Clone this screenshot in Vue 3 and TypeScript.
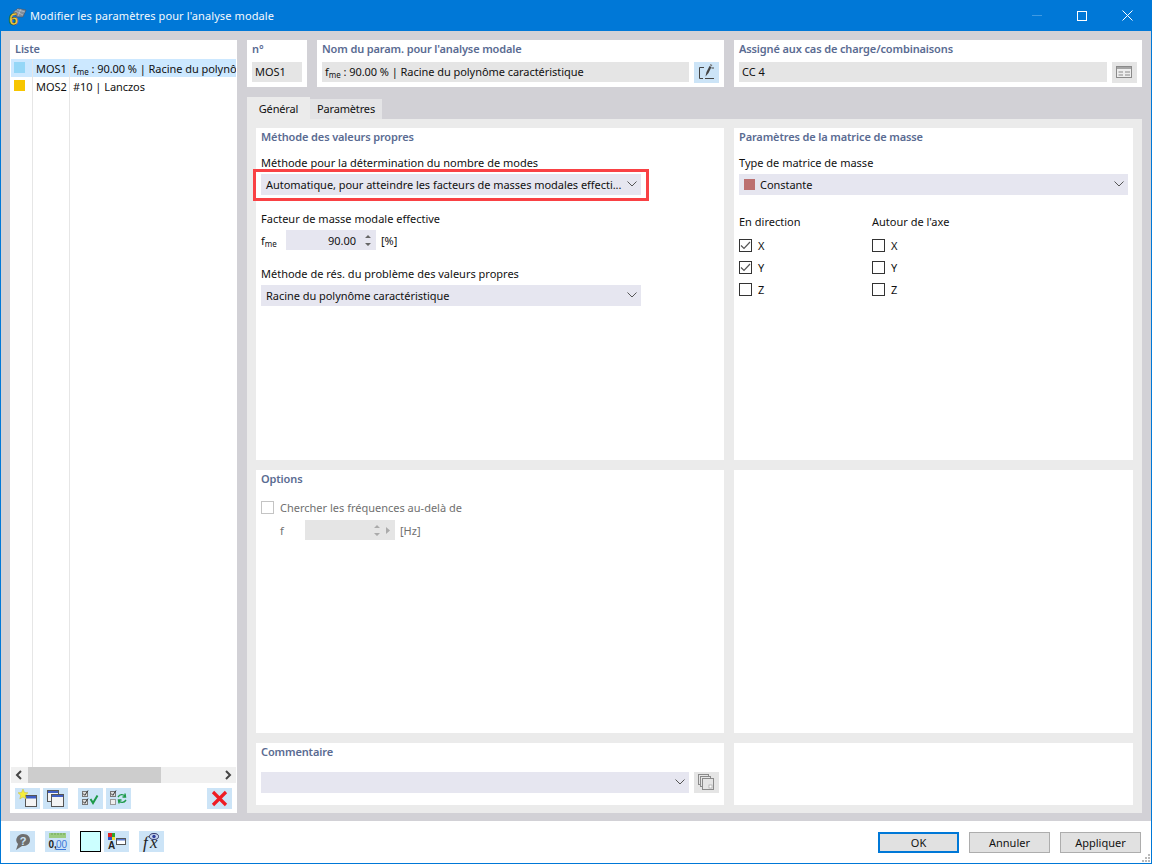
<script setup lang="ts">
const listRows = [
  { id: 'MOS1', color: '#95d7f7', fme: true, text: ' : 90.00 % | Racine du polynô', selected: true },
  { id: 'MOS2', color: '#f7c600', fme: false, text: '#10 | Lanczos', selected: false }
]

const axes = [
  { name: 'X', dir: true, rot: false },
  { name: 'Y', dir: true, rot: false },
  { name: 'Z', dir: false, rot: false }
]
</script>

<template>
  <div class="window">
    <header class="titlebar">
      <svg class="app-icon" width="20" height="26" viewBox="0 0 20 26">
        <path d="M5 9 L10 5.500 L18 7 L15 14 L9 14 Z" fill="#7f8c9c" stroke="#4c5664" stroke-width=".6" />
        <path d="M7 8 L15 12 M9 6.500 L17 9 M13 6 L10 13" stroke="#c6ccd4" stroke-width=".6" fill="none" />
        <text x="1" y="21.500" class="six">6</text>
      </svg>
      <span class="title">Modifier les paramètres pour l'analyse modale</span>
      <div class="win-controls">
        <span class="win-min"></span>
        <span class="win-max"></span>
        <svg class="win-close" width="11" height="11" viewBox="0 0 11 11">
          <path d="M.5 .5 L10.500 10.500 M10.500 .5 L.5 10.500" stroke="#fff" stroke-width="1" />
        </svg>
      </div>
    </header>

    <main class="body">
      <aside class="list-panel">
        <div class="section-title list-title">Liste</div>
        <div class="list">
          <div v-for="row in listRows" :key="row.id" class="list-row" :class="{ selected: row.selected }">
            <div class="cell cell-color"><span class="swatch" :style="{ background: row.color }"></span></div>
            <div class="cell cell-id">{{ row.id }}</div>
            <div class="cell cell-text"><template v-if="row.fme">f<sub>me</sub></template>{{ row.text }}</div>
          </div>
          <div class="list-row filler">
            <div class="cell cell-color"></div>
            <div class="cell cell-id"></div>
            <div class="cell cell-text"></div>
          </div>
        </div>
        <div class="hscroll">
          <svg width="17" height="16" viewBox="0 0 17 16"><path d="M10 4 L6 8 L10 12" fill="none" stroke="#444" stroke-width="2" /></svg>
          <div class="hscroll-track"><div class="hscroll-thumb"></div></div>
          <svg width="17" height="16" viewBox="0 0 17 16"><path d="M7 4 L11 8 L7 12" fill="none" stroke="#444" stroke-width="2" /></svg>
        </div>
        <div class="list-tools">
          <button class="icon-btn">
            <svg width="25" height="21" viewBox="0 0 25 21">
              <rect x="10.500" y="7.500" width="11" height="11" fill="#f4f4f4" stroke="#555" />
              <rect x="11" y="8" width="10" height="2.500" fill="#3f5fc4" />
              <path d="M8 1 L9.500 4.500 L13 4.800 L10.300 7.200 L11.200 11 L8 9 L4.800 11 L5.700 7.200 L3 4.800 L6.500 4.500 Z" fill="#f6ee3a" stroke="#c9b93a" stroke-width=".5" />
            </svg>
          </button>
          <button class="icon-btn">
            <svg width="25" height="21" viewBox="0 0 25 21">
              <rect x="4.500" y="2.500" width="11" height="11" fill="#f4f4f4" stroke="#555" />
              <rect x="5" y="3" width="10" height="2" fill="#3f5fc4" />
              <rect x="8.500" y="6.500" width="12" height="12" fill="#f4f4f4" stroke="#555" />
              <rect x="9" y="7" width="11" height="2" fill="#3f5fc4" />
            </svg>
          </button>
          <button class="icon-btn tool-gap">
            <svg width="25" height="21" viewBox="0 0 25 21">
              <rect x="4.500" y="3.500" width="5" height="5" fill="#ddd" stroke="#777" />
              <rect x="4.500" y="11.500" width="5" height="5" fill="#ddd" stroke="#777" />
              <path d="M5 5.500 L6.800 7.300 L10 2.500 M5 13.500 L6.800 15.300 L10 10.500" fill="none" stroke="#333" stroke-width="1" />
              <path d="M12.500 11 L15 15 L19.500 7.500" fill="none" stroke="#1e9a4a" stroke-width="2" />
            </svg>
          </button>
          <button class="icon-btn">
            <svg width="25" height="21" viewBox="0 0 25 21">
              <rect x="4.500" y="3.500" width="5" height="5" fill="#ddd" stroke="#777" />
              <rect x="4.500" y="11.500" width="5" height="5" fill="#eee" stroke="#999" />
              <path d="M5 5.500 L6.800 7.300 L10 2.500" fill="none" stroke="#333" stroke-width="1" />
              <path d="M12 9 C14 6 17 6 19 8 M19 5.500 L19.500 9 L16.500 9" fill="none" stroke="#1e9a4a" stroke-width="1.400" />
              <path d="M20 12 C18 15 15 15 13 13 M13 15.500 L12.500 12 L15.500 12" fill="none" stroke="#1e9a4a" stroke-width="1.400" />
            </svg>
          </button>
          <button class="icon-btn tool-push">
            <svg width="25" height="21" viewBox="0 0 25 21">
              <path d="M6 4 L19 17 M19 4 L6 17" stroke="#ee1c25" stroke-width="3.200" />
            </svg>
          </button>
        </div>
      </aside>

      <div class="content">
        <section class="head-row">
          <div class="head-box box-no">
            <div class="section-title">n°</div>
            <div class="readonly">MOS1</div>
          </div>
          <div class="head-box box-name">
            <div class="section-title">Nom du param. pour l'analyse modale</div>
            <div class="field-row">
              <div class="readonly grow">f<sub>me</sub> : 90.00 % | Racine du polynôme caractéristique</div>
              <button class="icon-btn">
                <svg width="25" height="21" viewBox="0 0 25 21">
                  <path d="M10 5.500 H5.500 V16.500 H9 M11 16.500 H20 M17.500 6 H20" fill="none" stroke="#444" stroke-width="1" />
                  <path d="M11.500 14.500 L12.500 10 L15.500 4 L17.500 5 L14.500 11 Z" fill="#444" />
                  <path d="M15.800 3.300 L16.400 2 L18.400 3 L17.800 4.300 Z" fill="#777" />
                </svg>
              </button>
            </div>
          </div>
          <div class="head-box box-assign">
            <div class="section-title">Assigné aux cas de charge/combinaisons</div>
            <div class="field-row">
              <div class="readonly grow">CC 4</div>
              <button class="icon-btn disabled">
                <svg width="25" height="21" viewBox="0 0 25 21">
                  <rect x="4.500" y="4.500" width="15" height="11" fill="#eee" stroke="#8a8a8a" />
                  <rect x="5" y="5" width="14" height="2" fill="#a5a5a5" />
                  <path d="M6.500 10 H11 M13 10 H18 M6.500 13 H11 M13 13 H18" stroke="#8a8a8a" />
                </svg>
              </button>
            </div>
          </div>
        </section>

        <nav class="tabs">
          <div class="tab active">Général</div>
          <div class="tab">Paramètres</div>
        </nav>

        <section class="tab-panel">
          <div class="card method-card">
            <div class="section-title">Méthode des valeurs propres</div>
            <label class="field-label first">Méthode pour la détermination du nombre de modes</label>
            <div class="highlighted">
              <div class="select wide">
                <span class="select-text">Automatique, pour atteindre les facteurs de masses modales effecti...</span>
                <svg class="chevron" width="10" height="6" viewBox="0 0 10 6"><path d="M.5 .5 L5 5 L9.500 .5" fill="none" stroke="#555" /></svg>
              </div>
              <div class="red-frame"></div>
            </div>
            <label class="field-label factor">Facteur de masse modale effective</label>
            <div class="spin-row">
              <span class="spin-name">f<sub>me</sub></span>
              <div class="spin">
                <span class="spin-value">90.00</span>
                <svg width="8" height="15" viewBox="0 0 8 15"><path d="M1 5 L4 2 L7 5 Z M1 10 L4 13 L7 10 Z" fill="#666" /></svg>
              </div>
              <span>[%]</span>
            </div>
            <label class="field-label solver">Méthode de rés. du problème des valeurs propres</label>
            <div class="select wide">
              <span class="select-text">Racine du polynôme caractéristique</span>
              <svg class="chevron" width="10" height="6" viewBox="0 0 10 6"><path d="M.5 .5 L5 5 L9.500 .5" fill="none" stroke="#555" /></svg>
            </div>
          </div>

          <div class="card matrix-card">
            <div class="section-title">Paramètres de la matrice de masse</div>
            <label class="field-label first">Type de matrice de masse</label>
            <div class="select">
              <span class="mass-swatch"></span>
              <span class="select-text">Constante</span>
              <svg class="chevron" width="10" height="6" viewBox="0 0 10 6"><path d="M.5 .5 L5 5 L9.500 .5" fill="none" stroke="#555" /></svg>
            </div>
            <div class="check-columns">
              <div class="check-col">
                <div class="check-head">En direction</div>
                <div v-for="a in axes" :key="a.name" class="check-row">
                  <span class="check">
                    <svg v-if="a.dir" width="11" height="11" viewBox="0 0 11 11"><path d="M1 5.500 L4 8.500 L10 2" fill="none" stroke="#555" stroke-width="1.200" /></svg>
                  </span>
                  <span>{{ a.name }}</span>
                </div>
              </div>
              <div class="check-col">
                <div class="check-head">Autour de l'axe</div>
                <div v-for="a in axes" :key="a.name" class="check-row">
                  <span class="check"></span>
                  <span>{{ a.name }}</span>
                </div>
              </div>
            </div>
          </div>

          <div class="card options-card">
            <div class="section-title">Options</div>
            <div class="option-check">
              <span class="check off"></span>
              <span>Chercher les fréquences au-delà de</span>
            </div>
            <div class="option-spin">
              <span class="f-name">f</span>
              <div class="spin off">
                <svg width="8" height="15" viewBox="0 0 8 15"><path d="M1 5 L4 2 L7 5 Z M1 10 L4 13 L7 10 Z" fill="#aaa" /></svg>
                <svg class="spin-arrow" width="6" height="9" viewBox="0 0 6 9"><path d="M1 1 L5 4.500 L1 8 Z" fill="#aaa" /></svg>
              </div>
              <span>[Hz]</span>
            </div>
          </div>
          <div class="card"></div>

          <div class="card comment-card">
            <div class="section-title">Commentaire</div>
            <div class="field-row comment-row">
              <div class="select grow">
                <svg class="chevron" width="10" height="6" viewBox="0 0 10 6"><path d="M.5 .5 L5 5 L9.500 .5" fill="none" stroke="#555" /></svg>
              </div>
              <button class="icon-btn disabled">
                <svg width="25" height="21" viewBox="0 0 25 21">
                  <rect x="4.500" y="2.500" width="10" height="10" fill="none" stroke="#8a8a8a" />
                  <rect x="6.500" y="4.500" width="10" height="10" fill="#e5e5e5" stroke="#8a8a8a" />
                  <rect x="8.500" y="6.500" width="11" height="11" fill="#e5e5e5" stroke="#8a8a8a" />
                  <rect x="15" y="13" width="3" height="3" fill="#fff" stroke="#999" stroke-width=".6" />
                </svg>
              </button>
            </div>
          </div>
          <div class="card"></div>
        </section>
      </div>
    </main>

    <footer class="footer">
      <button class="icon-btn">
        <svg width="25" height="21" viewBox="0 0 25 21">
          <path d="M13 3 C18 3 20 6 20 9 C20 13 17 15 12 15 L6 19 L8 13 C6 11 6 9 6.500 7.500 C7.500 4.500 10 3 13 3 Z" fill="#6e6e6e" />
          <text x="13" y="13.500" class="help-mark">?</text>
        </svg>
      </button>
      <button class="icon-btn ml-10">
        <svg width="25" height="21" viewBox="0 0 25 21">
          <rect x="4" y="2" width="17" height="5" fill="#9ccc82" />
          <path d="M7 2 V4 M10 2 V4 M13 2 V4 M16 2 V4 M19 2 V4" stroke="#6fa856" />
          <text x="3.500" y="16.500" class="num num-dark">0,</text>
          <text x="11" y="16.500" class="num num-blue">00</text>
          <path d="M11 18.500 H21" stroke="#3c78d8" />
        </svg>
      </button>
      <span class="color-box"></span>
      <button class="icon-btn ml-3">
        <svg width="25" height="21" viewBox="0 0 25 21">
          <rect x="4" y="2" width="4" height="4" fill="#e02020" />
          <rect x="8" y="2" width="3" height="4" fill="#2fa52f" />
          <rect x="4" y="6" width="4" height="3" fill="#2f4fc4" />
          <rect x="8" y="6" width="3" height="3" fill="#f4dc2c" />
          <text x="4" y="18" class="letter-a">A</text>
          <rect x="12.500" y="7.500" width="9" height="6" fill="#fff" stroke="#555" />
          <rect x="13" y="8" width="8" height="1.500" fill="#5b7bd0" />
        </svg>
      </button>
      <button class="icon-btn ml-10">
        <svg width="25" height="21" viewBox="0 0 25 21">
          <text x="4" y="17" class="fx">f</text>
          <text x="11" y="17" class="fx">x</text>
          <ellipse cx="15" cy="5.500" rx="4.500" ry="3" fill="#c9d6ef" stroke="#333a6e" />
          <circle cx="15" cy="5.500" r="1.700" fill="#2f3f9c" />
        </svg>
      </button>
      <div class="footer-actions">
        <button class="cmd default">OK</button>
        <button class="cmd">Annuler</button>
        <button class="cmd">Appliquer</button>
      </div>
      <svg class="grip" width="8" height="8" viewBox="0 0 8 8">
        <path d="M6 0h2v2H6z M3 3h2v2H3z M6 3h2v2H6z M0 6h2v2H0z M3 6h2v2H3z M6 6h2v2H6z" fill="#b9b9b9" />
      </svg>
    </footer>
  </div>
</template>

<style scoped>
.window {
  position: relative;
  width: 1152px;
  height: 864px;
  box-sizing: border-box;
  display: flex;
  flex-direction: column;
  border: 1px solid #0078d7;
  border-top: 0;
  font-family: "Noto Sans", "Open Sans", sans-serif;
  font-size: 11px;
  color: #111;
  background: #fff;
  overflow: hidden;
}
.titlebar {
  height: 31px;
  flex: none;
  display: flex;
  align-items: center;
  background: #0078d7;
  color: #f4f9fd;
  padding-left: 7px;
}
.app-icon {
  margin-right: 2px;
}
.six {
  font-size: 16px;
  font-weight: 700;
  fill: #f3cf3f;
  stroke: #4a3f1a;
  stroke-width: 0.5px;
}
.title {
  font-size: 11px;
  letter-spacing: 0.1px;
}
.win-controls {
  margin-left: auto;
  display: flex;
  align-items: center;
  padding-right: 18px;
}
.win-min {
  width: 10px;
  height: 1px;
  background: #3f9ae2;
  margin-right: 35px;
}
.win-max {
  width: 8px;
  height: 8px;
  border: 1px solid #fff;
  margin-right: 35px;
}
.win-close {
  display: block;
}
.body {
  height: 790px;
  flex: none;
  background: #d2d1d6;
  display: flex;
  padding: 9px 9px 8px 9px;
  box-sizing: border-box;
  gap: 10px;
}
.list-panel {
  width: 227px;
  flex: none;
  background: #fff;
  display: flex;
  flex-direction: column;
  padding: 0 1px;
  box-sizing: border-box;
}
.section-title {
  font-weight: 600;
  color: #5a6b92;
  line-height: 16px;
  letter-spacing: -0.13px;
}
.list-title {
  padding: 1px 0 2px 4px;
}
.list {
  flex: 1;
  display: flex;
  flex-direction: column;
  min-height: 0;
}
.list-row {
  display: flex;
  height: 18px;
  line-height: 20px;
  white-space: nowrap;
}
.list-row.selected {
  background: #cce8ff;
}
.list-row.filler {
  flex: 1;
}
.cell {
  box-sizing: border-box;
  height: 100%;
}
.cell-color {
  width: 22px;
  border-right: 1px solid #e6e6e6;
  padding: 3px 0 0 3px;
}
.cell-id {
  width: 37px;
  border-right: 1px solid #e6e6e6;
  padding-left: 3px;
}
.cell-text {
  flex: 1;
  min-width: 0;
  overflow: hidden;
  padding-left: 3px;
  letter-spacing: -0.05px;
}
.swatch {
  display: block;
  width: 11px;
  height: 11px;
}
sub {
  font-size: 8px;
  vertical-align: baseline;
  position: relative;
  top: 2px;
  line-height: 0;
}
.hscroll {
  height: 16px;
  flex: none;
  display: flex;
  background: #f0f0f0;
}
.hscroll-track {
  flex: 1;
}
.hscroll-thumb {
  width: 133px;
  height: 100%;
  background: #cdcdcd;
}
.list-tools {
  height: 30px;
  flex: none;
  display: flex;
  gap: 3px;
  padding: 5px 4px 4px 4px;
  box-sizing: border-box;
}
.icon-btn {
  width: 25px;
  height: 21px;
  padding: 0;
  border: 0;
  background: #cce4f7;
  flex: none;
  display: block;
}
.icon-btn svg {
  display: block;
}
.icon-btn.disabled {
  background: #e5e5e5;
}
.tool-gap {
  margin-left: 7px;
}
.tool-push {
  margin-left: auto;
}
.content {
  width: 895px;
  flex: none;
  display: flex;
  flex-direction: column;
}
.head-row {
  display: flex;
  gap: 10px;
  height: 47px;
  flex: none;
}
.head-box {
  background: #fff;
  padding: 0 5px;
  box-sizing: border-box;
}
.head-box .section-title {
  height: 22px;
  line-height: 17px;
}
.box-no {
  width: 60px;
}
.box-name {
  width: 407px;
}
.box-assign {
  width: 408px;
}
.readonly {
  background: #e5e5e5;
  height: 20px;
  line-height: 20px;
  padding-left: 3px;
  white-space: nowrap;
  letter-spacing: -0.05px;
}
.field-row {
  display: flex;
  gap: 5px;
}
.grow {
  flex: 1;
  min-width: 0;
}
.tabs {
  display: flex;
  align-items: flex-end;
  height: 22px;
  margin-top: 10px;
  flex: none;
}
.tab {
  height: 20px;
  line-height: 20px;
  width: 72px;
  text-align: center;
  background: #e4e4e6;
  letter-spacing: -0.15px;
}
.tab.active {
  height: 22px;
  line-height: 23px;
  width: 63px;
  background: #ebebeb;
}
.tab-panel {
  flex: 1;
  background: #ebebeb;
  display: grid;
  grid-template-columns: 468px 399px;
  grid-template-rows: 332px 263px 62px;
  gap: 10px;
  padding: 9px 9px 8px 9px;
}
.card {
  background: #fff;
  padding: 1px 5px 0 5px;
  box-sizing: border-box;
}
.field-label {
  display: block;
  line-height: 16px;
}
.field-label.first {
  margin-top: 10px;
  margin-bottom: 3px;
}
.field-label.factor {
  margin-top: 16px;
  margin-bottom: 3px;
}
.field-label.solver {
  margin-top: 16px;
  margin-bottom: 3px;
}
.select {
  position: relative;
  height: 21px;
  background: #e6e6f0;
  display: flex;
  align-items: center;
  padding-left: 5px;
  box-sizing: border-box;
}
.wide {
  width: 380px;
}
.select-text {
  white-space: nowrap;
  letter-spacing: -0.04px;
}
.chevron {
  position: absolute;
  right: 4px;
  top: 7px;
}
.highlighted {
  position: relative;
}
.red-frame {
  position: absolute;
  left: -8px;
  top: -5px;
  width: 390px;
  height: 26px;
  border: 3px solid #f94144;
}
.spin-row {
  display: flex;
  align-items: center;
  height: 20px;
}
.spin-name {
  width: 25px;
}
.spin {
  width: 90px;
  height: 20px;
  background: #e6e6f0;
  display: flex;
  align-items: center;
  justify-content: flex-end;
  padding-right: 4px;
  box-sizing: border-box;
  margin-right: 5px;
  gap: 5px;
}
.spin.off {
  background: #e5e5e5;
  gap: 4px;
}
.spin-value {
  margin-right: 3px;
}
.mass-swatch {
  width: 11px;
  height: 11px;
  background: #bc7070;
  margin-right: 5px;
}
.check-columns {
  display: flex;
  margin-top: 19px;
}
.check-col {
  width: 133px;
}
.check-head {
  line-height: 16px;
  margin-bottom: 4px;
}
.check-row {
  display: flex;
  align-items: center;
  gap: 6px;
  height: 22px;
}
.check {
  width: 11px;
  height: 11px;
  border: 1px solid #333;
  flex: none;
  display: block;
}
.check svg {
  display: block;
}
.check.off {
  border-color: #c4c4c4;
}
.options-card {
  color: #707070;
}
.option-check {
  display: flex;
  align-items: center;
  gap: 6px;
  margin-top: 12px;
  height: 16px;
}
.option-spin {
  display: flex;
  align-items: center;
  margin-top: 5px;
  padding-left: 19px;
}
.f-name {
  width: 25px;
}
.comment-row {
  margin-top: 12px;
}
.footer {
  flex: 1;
  display: flex;
  align-items: flex-start;
  padding: 10px 0 0 9px;
  position: relative;
}
.ml-10 {
  margin-left: 10px;
}
.ml-3 {
  margin-left: 3px;
}
.color-box {
  width: 19px;
  height: 19px;
  border: 1px solid #000;
  background: #ccffff;
  margin-left: 10px;
  flex: none;
}
.help-mark {
  font-size: 11px;
  font-weight: 700;
  fill: #cce4f7;
  text-anchor: middle;
}
.num {
  font-size: 10px;
  font-weight: 700;
}
.num-dark {
  fill: #222;
}
.num-blue {
  fill: #3c78d8;
  font-weight: 400;
}
.letter-a {
  font-size: 10px;
  font-weight: 700;
  fill: #222;
}
.fx {
  font-family: "Liberation Serif", serif;
  font-style: italic;
  font-size: 17px;
  fill: #222;
}
.footer-actions {
  margin-left: auto;
  display: flex;
  gap: 10px;
  margin-top: 1px;
  margin-right: 10px;
}
.cmd {
  width: 81px;
  height: 21px;
  box-sizing: border-box;
  border: 1px solid #adadad;
  background: #e1e1e1;
  font: inherit;
  color: #111;
  padding: 0;
}
.cmd.default {
  border: 2px solid #0078d7;
}
.grip {
  position: absolute;
  right: 1px;
  bottom: 1px;
}
</style>

<style>
html, body {
  margin: 0;
  background: #fff;
}
</style>
